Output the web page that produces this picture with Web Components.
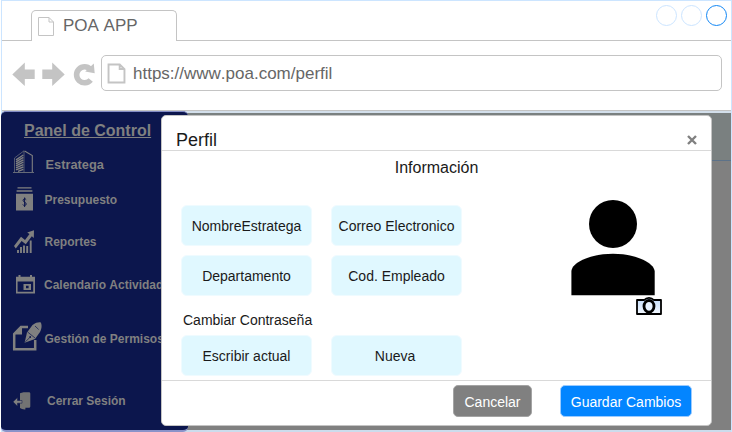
<!DOCTYPE html>
<html lang="es">
<head>
<meta charset="utf-8">
<title>POA APP</title>
<style>
html,body{margin:0;padding:0;width:732px;height:432px;overflow:hidden;background:#fff;font-family:"Liberation Sans",Arial,sans-serif;font-kerning:none}
</style>
</head>
<body>
<poa-browser tab="POA APP" url="https://www.poa.com/perfil">
  <poa-sidebar heading="Panel de Control">
    <poa-link icon="building" style="--h:36px;--x:44.5px;--fs:12.8px">Estratega</poa-link>
    <poa-link icon="budget" style="--h:42px;--x:43.5px">Presupuesto</poa-link>
    <poa-link icon="chart" style="--h:43px;--x:43.5px">Reportes</poa-link>
    <poa-link icon="calendar" style="--h:54px;--x:43px">Calendario Actividades</poa-link>
    <poa-link icon="note" style="--h:62px;--x:43.5px">Gestión de Permisos</poa-link>
    <poa-link icon="exit" style="--h:30px;--x:46px">Cerrar Sesión</poa-link>
  </poa-sidebar>
  <poa-dialog slot="dialog" heading="Perfil">
    <poa-profile></poa-profile>
    <poa-button slot="actions" style="--w:79px;--bg:#808080;--bd:#a4a4a4">Cancelar</poa-button>
    <poa-button slot="actions" style="--w:132px;--bg:#0385ff;--bd:#9bcbff">Guardar Cambios</poa-button>
  </poa-dialog>
</poa-browser>
<script>
const icons = {
  building: `<svg width="21" height="24" viewBox="0 0 21 24" style="margin:-1px 0 0 12px" fill="none" stroke="#808080"><path d="M0 22.5H21" stroke-width="1.2" stroke="#656a78"/><path d="M1.5 22V8L11 .8V22" stroke-width=".8" stroke="#656a78"/><path d="M11.6 1L19.3 5.5V22" stroke-width="1.1"/><path d="M3 9.8L10.3 5M3 11.8L10.3 7.4M3 13.8L10.3 9.8M3 15.8L10.3 12.2M3 17.8L10.3 14.6M3 19.8L10.3 17M5 21.3L10.3 19.4" stroke-width="1.4"/></svg>`,
  budget: `<svg width="17" height="24" viewBox="0 0 17 24" style="margin-left:15px"><path d="M1.5 .2H15.5V1.5H1.5ZM.6 3.2H16.4V4.8H.6ZM0 6.7H17V23.6H0Z" fill="#808080"/><path d="M10.2 12.7C9.6 11.4 6.9 11.7 7.1 13.5C7.3 15.3 10.2 15 10.2 17C10.2 18.9 7.4 19 6.8 17.5M8.6 10.5V20" fill="none" stroke="#0c164d" stroke-width="1"/></svg>`,
  chart: `<svg width="21" height="24" viewBox="0 0 21 24" style="margin:1px 0 0 13px"><path d="M0 16L7 6.8L11 10L15.5 4L13.2 2.4L20 .2L19.8 8L17.8 6.3L11.8 14.2L7.6 11L1.8 18.5Z" fill="#808080"/><path d="M4 20V23M7 17V23M10 15.6V23M13.2 16V23M16.7 10.5V23" stroke="#808080" stroke-width="1.9"/></svg>`,
  calendar: `<svg width="19" height="19" viewBox="0 0 19 19" style="margin:3px 0 0 15px" fill="#808080"><path fill-rule="evenodd" d="M0 1.8H2.5V0H4.5V1.8H14V0H16V1.8H19V18.5H0ZM1.6 6.5V16.8H17.2V6.5Z"/><path fill-rule="evenodd" d="M7.5 9H15V15H7.5ZM10 10.8V13.2H12.6V10.8Z"/></svg>`,
  note: `<svg width="29" height="29" viewBox="0 0 29 29" style="margin:-4px 0 0 11.5px"><path d="M15 5H8L1.2 12V27.2H22.2V18" fill="none" stroke="#808080" stroke-width="2.5"/><path d="M9 3.7V12.5H.2Z" fill="#808080"/><path d="M27.5 .2C25 0 22.5 .6 19.5 3L14 10.5L11.6 20.8L22 17L27 10C29 6 29 2 27.5 .2Z" fill="#808080"/><path d="M14.6 10L22 16M12.2 20L16.8 15.5M22 4L25.7 7.5" stroke="#0c164d" stroke-width=".7"/><circle cx="17.2" cy="15" r=".9" fill="#0c164d"/></svg>`,
  exit: `<svg width="18" height="18" viewBox="0 0 18 18" style="margin:4px 0 0 11.5px"><path d="M7 1.2L10.5 .2H16Q17.3 .2 17.3 1.5V14.5Q17.3 15.8 16 15.8H12.4V17.4Q9 17.7 7 16Z" fill="#737373"/><path d="M0 9.8L4.5 5.5V8.5H9V11.2H4.5V14.2Z" fill="#808080" stroke="#0c164d" stroke-width=".5"/></svg>`
};
const define = (name, render) => customElements.define(name, class extends HTMLElement {
  connectedCallback() {
    if (!this.shadowRoot) this.attachShadow({mode: 'open'}).innerHTML = render(this);
  }
});

define('poa-page-icon', () => `<style>:host{display:block;flex:none}svg{display:block;width:100%;height:100%;overflow:visible}path{stroke-width:var(--sw,1)}</style>
<svg viewBox="0 0 16 19" preserveAspectRatio="none" fill="#fff" stroke="#c4c4c4"><path d="M.5 .5H11L15.5 5V18.5H.5ZM11 .5V5H15.5"/></svg>`);

define('poa-browser', el => `<style>
:host{display:block;position:relative;width:732px;height:432px;color:#666}
.frame{box-sizing:border-box;height:432px;margin-left:1px;width:731px;border:1px solid #cce5ff;border-bottom:0;display:flex;flex-direction:column}
.tabs{height:40px;flex:none;display:flex;align-items:flex-end}
.tabs i{border-bottom:1px solid #c4c4c4;height:0}
.tab{box-sizing:border-box;width:146px;height:31px;border:1px solid #c4c4c4;border-bottom:0;border-radius:5px 5px 0 0;display:flex;padding:6px 0 0 6px;font-size:17px;line-height:19px}
.tab span{margin:-1px 0 0 9px}
.tab poa-page-icon{width:16px;height:19px}
.dots{position:absolute;right:5px;top:5px;display:flex;gap:4px}
.dots b{box-sizing:border-box;width:21px;height:21px;border:1px solid #cce5ff;border-radius:50%}
.dots b:last-child{border-color:#1287f5}
.bar{flex:none;display:flex;box-sizing:border-box;padding:14px 9px 0 10px;border-bottom:1px solid #c4c4c4;height:70px}
.nav{width:89px;flex:none}.nav svg{display:block}
.url{box-sizing:border-box;flex:1;height:36px;border:1px solid #c4c4c4;border-radius:5px;display:flex;align-items:center;padding-left:6px;font-size:17px}
.url poa-page-icon{width:17px;height:19px;--sw:1.8}
.url span{margin:2px 0 0 8px}
.content{flex:1;display:flex;background:linear-gradient(#d3dfeb 0 2px,#7a8080 2px 49px,#5d7289 49px 50px,#808080 50px 319px,#cbdcec 319px)}
</style>
<div class="frame">
<div class="tabs"><i style="width:29px"></i><div class="tab"><poa-page-icon></poa-page-icon><span>${el.getAttribute('tab')}</span></div><i style="flex:1"></i></div>
<div class="dots"><b></b><b></b><b></b></div>
<div class="bar"><div class="nav"><svg width="89" height="36" viewBox="0 0 89 36" fill="#c4c4c4"><path d="M.3 19.5L12.8 7.5V14.5H22.7V24H12.8V31Z"/><path d="M52.7 19.5L40.2 7.5V14.5H30.3V24H40.2V31Z"/><path d="M79.3 24.2A8 8 0 1 1 79 13.5" fill="none" stroke="#c4c4c4" stroke-width="5.6" transform="translate(-.6 .8)"/><path d="M81.8 8.5L82.7 18.2L73.2 16.5Z"/></svg></div>
<div class="url"><poa-page-icon></poa-page-icon><span>${el.getAttribute('url')}</span></div></div>
<div class="content"><slot></slot></div>
</div><slot name="dialog"></slot>`);

define('poa-sidebar', el => `<style>
:host{display:block;box-sizing:border-box;margin-left:-1px;width:187px;height:321px;border-top:1px solid #828bc4;border-bottom:2px solid #8a93c9;border-radius:5px;background:#0c164d;color:#808080;overflow:hidden}
h2{margin:9px 0 7px 23px;font-size:16px;line-height:20px;font-weight:bold;text-decoration:underline}
</style><h2>${el.getAttribute('heading')}</h2><slot></slot>`);

define('poa-link', el => `<style>
:host{display:flex;height:var(--h);font-weight:bold;font-size:var(--fs,12px);line-height:17px;white-space:nowrap}
.icon{width:var(--x);flex:none;margin-top:-1px}svg{display:block;overflow:visible}
span{margin-top:8px}
</style><div class="icon"><div style="padding-top:4px">${icons[el.getAttribute('icon')]}</div></div><span><slot></slot></span>`);

define('poa-dialog', el => `<style>
:host{position:absolute;left:161px;top:115px;box-sizing:border-box;width:551px;height:311px;background:#fff;border:1px solid #c4c4c4;border-radius:5px;display:flex;flex-direction:column;color:#1a1a1a}
header{height:34px;flex:none;display:flex;justify-content:space-between;border-bottom:1px solid #d9d9d9;font-size:18px;line-height:20px;padding:0 14px 0 14px}
header span{margin-top:14px}header svg{margin-top:19px}
main{flex:1}
footer{height:45px;flex:none;box-sizing:border-box;border-top:1px solid #d9d9d9;display:flex;justify-content:flex-end;gap:28px;padding:4px 19px 0 0}
</style><header><span>${el.getAttribute('heading')}</span><svg width="10" height="10" viewBox="0 0 10 10"><path d="M1 1L9 9M9 1L1 9" stroke="#808080" stroke-width="2.4"/></svg></header>
<main><slot></slot></main><footer><slot name="actions"></slot></footer>`);

define('poa-button', () => `<style>:host{box-sizing:border-box;display:flex;align-items:center;justify-content:center;width:var(--w);height:32px;padding-top:2px;border:1px solid var(--bd);border-radius:5px;background:var(--bg);color:#fff;font-size:14px;white-space:nowrap}</style><slot></slot>`);

define('poa-field', () => `<style>:host{display:flex;box-sizing:border-box;align-items:center;justify-content:center;height:41px;padding-top:1px;border:1px solid #effbff;border-radius:6px;background:#e0f8ff;color:#1a1a1a;font-size:14px;white-space:nowrap}</style><slot></slot>`);

define('poa-profile', () => `<style>
:host{display:block}
h3{margin:0;padding-top:7px;font-size:16px;line-height:20px;font-weight:normal;text-align:center;height:28px;box-sizing:content-box}
.row{display:flex}
.grid{display:grid;grid-template-columns:131px 131px;gap:9px 19px;padding:19px 0 0 19px;width:300px;height:178px;box-sizing:border-box;align-content:start}
.grid poa-field:last-child{padding-right:3px}
p{grid-column:1/3;margin:5px 0 -5px 2px;font-size:14px;line-height:21px;height:21px}
.photo{margin:14px 0 0 109px}svg{display:block;overflow:visible}
.camera{margin:1px 0 0 65px}
</style><h3>Información</h3><div class="row"><div class="grid">
<poa-field>NombreEstratega</poa-field><poa-field>Correo Electronico</poa-field>
<poa-field>Departamento</poa-field><poa-field>Cod. Empleado</poa-field>
<p>Cambiar Contraseña</p>
<poa-field>Escribir actual</poa-field><poa-field>Nueva</poa-field></div>
<div class="photo"><svg width="84" height="96" viewBox="0 0 84 96"><circle cx="42" cy="24" r="24"/><path d="M.4 95.3V71C1.5 61.5 21 53.8 42 53.8S82 61.5 83.7 71V95.3Z"/></svg>
<svg class="camera" width="26" height="18" viewBox="0 0 26 18"><defs><linearGradient id="g" x2="0" y2="1"><stop stop-color="#c2dcfb"/><stop offset="1" stop-color="#f3f8ff"/></linearGradient></defs><path d="M1 3H8.2Q10 .8 13 .8T17.8 3H25V17H1Z" fill="url(#g)" stroke="#000" stroke-width="1.8" stroke-linejoin="round"/><ellipse cx="13" cy="9.3" rx="5" ry="5.8" fill="#e7f2ff" stroke="#000" stroke-width="2.8"/></svg></div></div>`);
</script>
</body>
</html>
